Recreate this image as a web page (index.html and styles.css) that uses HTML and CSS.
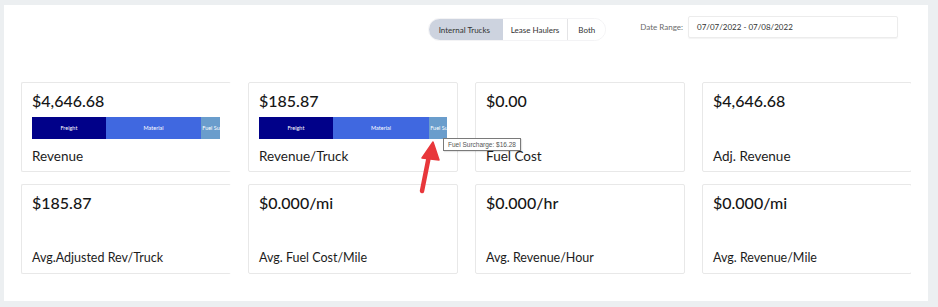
FILE: index.html
```html
<!DOCTYPE html>
<html>
<head>
<meta charset="utf-8">
<link rel="stylesheet" href="styles.css">
</head>
<body>
<div class="panel">
  <div class="toolbar">
    <div class="toggle">
      <span class="opt active">Internal Trucks</span>
      <span class="opt">Lease Haulers</span>
      <span class="opt last">Both</span>
    </div>
    <div class="range">
      <span class="range-label">Date Range:</span>
      <div class="range-input">07/07/2022 - 07/08/2022</div>
    </div>
  </div>
  <div class="cards">
    <div class="card open-right">
      <div class="value">$4,646.68</div>
      <div class="bar">
        <div class="seg freight" style="width:39.5%">Freight</div>
        <div class="seg material" style="width:51%">Material</div>
        <div class="seg fuel" style="width:9.5%">Fuel Surcharge</div>
      </div>
      <div class="label">Revenue</div>
    </div>
    <div class="card">
      <div class="value">$185.87</div>
      <div class="bar">
        <div class="seg freight" style="width:39.5%">Freight</div>
        <div class="seg material" style="width:51.5%">Material</div>
        <div class="seg fuel" style="width:9%">Fuel Surcharge</div>
      </div>
      <div class="label">Revenue/Truck</div>
    </div>
    <div class="card">
      <div class="value">$0.00</div>
      <div class="label">Fuel Cost</div>
    </div>
    <div class="card">
      <div class="value">$4,646.68</div>
      <div class="label">Adj. Revenue</div>
    </div>
    <div class="card open-right">
      <div class="value">$185.87</div>
      <div class="label small">Avg.Adjusted Rev/Truck</div>
    </div>
    <div class="card">
      <div class="value">$0.000/mi</div>
      <div class="label small">Avg. Fuel Cost/Mile</div>
    </div>
    <div class="card">
      <div class="value">$0.000/hr</div>
      <div class="label small">Avg. Revenue/Hour</div>
    </div>
    <div class="card">
      <div class="value">$0.000/mi</div>
      <div class="label small">Avg. Revenue/Mile</div>
    </div>
  </div>
  <div class="tooltip">Fuel Surcharge: $16.28</div>
  <svg class="arrow" width="40" height="62" viewBox="0 0 40 62">
    <line x1="12" y1="51" x2="19" y2="16" stroke="#e8373b" stroke-width="4.5" stroke-linecap="round"/>
    <polygon points="23,2 29,20 12,18" fill="#e8373b" stroke="#e8373b" stroke-width="1.5" stroke-linejoin="round"/>
  </svg>
</div>
</body>
</html>
```

FILE: styles.css
```css
html, body {
  margin: 0;
  padding: 0;
}
body {
  background: #eceff1;
  padding: 5px 10px 6px 4px;
  font-family: "Lato", "Open Sans", sans-serif;
  color: #1c1c1c;
}
.panel {
  position: relative;
  background: #ffffff;
  height: 296px;
  box-sizing: border-box;
  padding: 11px 0 0 17px;
}
.toolbar {
  display: flex;
  justify-content: flex-end;
  align-items: flex-start;
  padding-right: 30px;
  height: 30px;
}
.toggle {
  display: flex;
  margin-top: 2px;
  height: 23px;
  border-radius: 12px;
  border: 1px solid #f3f3f5;
  box-sizing: border-box;
  overflow: hidden;
  font-size: 8px;
  color: #333;
}
.opt {
  display: flex;
  align-items: center;
  padding: 0 8px;
  background: #fff;
}
.opt.active {
  background: #cdd3df;
  padding: 0 9px 0 10px;
  width: 55px;
}
.opt.last {
  border-left: 1px solid #e4e4e6;
  padding: 0 10px 0 10px;
}
.range {
  display: flex;
  align-items: center;
  margin-left: 34px;
}
.range-label {
  font-size: 8px;
  color: #6a6a6a;
  margin-right: 5px;
}
.range-input {
  width: 210px;
  height: 22px;
  box-sizing: border-box;
  border: 1px solid #ececec;
  border-radius: 2px;
  box-shadow: 0 1px 1px rgba(0,0,0,0.05);
  font-size: 8px;
  color: #333;
  display: flex;
  align-items: center;
  padding-left: 8px;
}
.cards {
  margin-top: 36px;
  width: 890px;
  overflow: hidden;
  display: grid;
  grid-template-columns: repeat(4, 210px);
  grid-auto-rows: 90px;
  column-gap: 17px;
  row-gap: 12px;
}
.card {
  border: 1px solid #e8e8e8;
  border-radius: 2px;
  box-sizing: border-box;
  padding: 8px 10px 7px 10px;
  display: flex;
  flex-direction: column;
  justify-content: space-between;
}
.card.open-right {
  border-right-color: transparent;
}
.value {
  font-size: 16px;
  line-height: 20px;
  font-weight: 500;
  color: #161616;
}
.bar {
  display: flex;
  height: 22px;
  margin-top: -3px;
  overflow: hidden;
}
.seg {
  height: 100%;
  font-size: 5.5px;
  color: #fff;
  display: flex;
  align-items: center;
  justify-content: center;
  white-space: nowrap;
  overflow: hidden;
}
.seg.freight { background: #010189; }
.seg.material { background: #4068e0; }
.seg.fuel { background: #6a9dcc; justify-content: flex-start; padding-left: 1px; }
.label {
  font-size: 13.5px;
  line-height: 16px;
  color: #1c1c1c;
}
.label.small {
  font-size: 12.5px;
}
.tooltip {
  position: absolute;
  left: 439px;
  top: 133px;
  height: 13px;
  box-sizing: border-box;
  border: 1px solid #7a7a7a;
  background: #fff;
  font-family: "Liberation Sans", sans-serif;
  font-size: 6.5px;
  color: #555;
  padding: 0 4px;
  display: flex;
  align-items: center;
  box-shadow: 1px 1px 1px rgba(0,0,0,0.1);
}
.arrow {
  position: absolute;
  left: 406px;
  top: 135px;
}
```
